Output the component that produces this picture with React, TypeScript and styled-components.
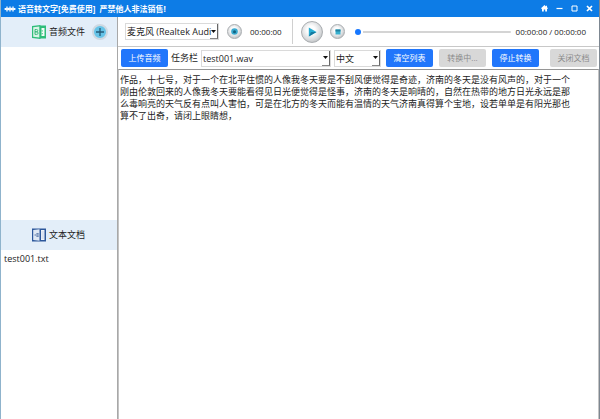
import React, { useState } from "react";
import styled, { createGlobalStyle, css } from "styled-components";

const GlobalStyle = createGlobalStyle`
  *, *::before, *::after { box-sizing: border-box; }
  body {
    margin: 0;
    background: #fff;
    color: #222;
    font-family: "Open Sans", "Noto Sans CJK SC", sans-serif;
    font-size: 9px;
    line-height: 12px;
  }
  button, input, select, textarea { font: inherit; color: inherit; margin: 0; }
`;

const Window = styled.div`
  display: flex;
  flex-direction: column;
  min-height: 100vh;
  border-left: 1px solid #8fb3cc;
  border-right: 1px solid #7d8791;
`;

const TitleBar = styled.header`
  display: flex;
  align-items: center;
  height: 17px;
  padding: 0 2px 0 3px;
  background: #0d7ce6;
  color: #fff;
`;

const Title = styled.h1`
  flex: 1;
  margin: 0 0 0 2px;
  font-size: 8px;
  line-height: 12px;
  font-weight: 700;
  white-space: pre;
`;

const WindowButton = styled.button`
  display: flex;
  align-items: center;
  justify-content: center;
  width: 15px;
  height: 15px;
  padding: 0;
  border: 0;
  background: none;
`;

const Body = styled.div`
  flex: 1;
  display: grid;
  grid-template-columns: 117px minmax(0, 1fr);
`;

const Sidebar = styled.aside`
  display: grid;
  grid-template-rows: 51fr 50fr;
  border-right: 1px solid #a8a8a8;
`;

const SectionHeader = styled.div`
  display: flex;
  align-items: center;
  height: 30px;
  padding-left: 31px;
  background: #e3eef9;
`;

const SectionTitle = styled.h2`
  margin: 0 0 0 3px;
  font-size: 9px;
  line-height: 12px;
  font-weight: 400;
`;

const FileList = styled.ul`
  margin: 0;
  padding: 3px;
  list-style: none;
`;

const roundFace = css`
  display: flex;
  align-items: center;
  justify-content: center;
  flex: none;
  padding: 0;
  border-radius: 50%;
`;

const AddButton = styled.button`
  ${roundFace}
  width: 16px;
  height: 16px;
  margin-left: 7px;
  border: 2px solid #ced9e2;
  background: #66c4e8;
`;

const MediaButton = styled.button<{ $size: number }>`
  ${roundFace}
  width: ${(p) => p.$size}px;
  height: ${(p) => p.$size}px;
  border: 1px solid #a9adb0;
  background: radial-gradient(circle at 45% 40%, #fdfdfd 25%, #d8dadc 60%, #a2a5a8 100%);
`;

const Main = styled.main`
  display: flex;
  flex-direction: column;
  min-width: 0;
`;

const PlayerBar = styled.div`
  display: flex;
  align-items: center;
  height: 30px;
  padding: 0 13px 0 7px;
  border-bottom: 1px solid #c8c8c8;
`;

const Recorder = styled.div`
  display: flex;
  align-items: center;
  width: 168px;
  height: 25px;
  gap: 8px;
  border-right: 1px solid #d0d0d0;
`;

const Player = styled.div`
  flex: 1;
  display: flex;
  align-items: center;
  min-width: 0;
  padding-left: 8px;
  gap: 7px;
`;

const Time = styled.span`
  font-size: 8px;
  white-space: nowrap;
`;

const Progress = styled.input`
  flex: 1;
  min-width: 0;
  height: 12px;
  margin-left: 3px;
  margin-right: -2px;
  appearance: none;
  background: transparent;
  &::-webkit-slider-runnable-track {
    height: 2px;
    border-radius: 1px;
    background: linear-gradient(to right, #fff 8px, #d4d4d4 8px);
  }
  &::-webkit-slider-thumb {
    appearance: none;
    width: 6px;
    height: 6px;
    margin-top: -2px;
    border-radius: 50%;
    background: #1677ff;
  }
`;

const TaskBar = styled.div`
  display: flex;
  align-items: center;
  height: 22px;
  padding: 0 2px 0 3px;
`;

const ActionButton = styled.button`
  flex: none;
  width: 47px;
  height: 18px;
  padding: 0;
  border: 0;
  border-radius: 2px;
  background: #2176fb;
  color: #fff;
  font-size: 8px;
  line-height: 12px;
  white-space: nowrap;
  &:disabled {
    background: #d8d8d8;
    color: #8b8b8b;
  }
`;

const Actions = styled.div`
  display: flex;
  margin-left: 5px;
  gap: 6px;
  & > :last-child { margin-left: 5px; }
`;

const TaskLabel = styled.label`
  margin: 0 3px;
  white-space: nowrap;
`;

const SelectFrame = styled.span<{ $width?: number }>`
  position: relative;
  display: flex;
  flex: ${(p) => (p.$width ? "none" : "1")};
  width: ${(p) => (p.$width ? `${p.$width}px` : "auto")};
  min-width: 0;
  height: 17px;
  border: 1px solid #dadada;
`;

const Select = styled.select`
  width: 100%;
  padding: 0 6px 0 1px;
  border: 0;
  appearance: none;
  background: #fff;
  line-height: 15px;
`;

const Arrow = styled.span`
  position: absolute;
  top: 0;
  right: 0;
  bottom: 0;
  width: 8px;
  display: flex;
  align-items: center;
  justify-content: center;
  border-right: 1px solid #666;
  border-bottom: 1px solid #888;
  pointer-events: none;
`;

const LanguageSlot = styled.div`
  margin-left: 3px;
`;

const Transcript = styled.textarea`
  flex: 1;
  width: 100%;
  padding: 4px 2px 3px 1px;
  border: 0;
  border-top: 1px solid #969696;
  border-right: 1px solid #c4c4c4;
  border-left: 1px solid #c4c4c4;
  outline: 0;
  resize: none;
  font-size: 9px;
  line-height: 12px;
  white-space: pre-wrap;
`;

const transcript = [
  "作品，十七号，对于一个在北平住惯的人像我冬天要是不刮风便觉得是奇迹，济南的冬天是没有风声的，对于一个",
  "刚由伦敦回来的人像我冬天要能看得见日光便觉得是怪事，济南的冬天是响晴的，自然在热带的地方日光永远是那",
  "么毒响亮的天气反有点叫人害怕，可是在北方的冬天而能有温情的天气济南真得算个宝地，设若单单是有阳光那也",
  "算不了出奇，请闭上眼睛想，",
].join("\n");

function DropDown({ label, value, width, id }: { label: string; value: string; width?: number; id: string }) {
  return (
    <SelectFrame $width={width}>
      <Select id={id} aria-label={label} defaultValue={value}>
        <option>{value}</option>
      </Select>
      <Arrow>
        <svg width="5" height="3" viewBox="0 0 5 3" aria-hidden="true">
          <path d="M0 0h5L2.5 3z" fill="#111" />
        </svg>
      </Arrow>
    </SelectFrame>
  );
}

const Logo = () => (
  <svg width="12" height="8" viewBox="0 0 12 8" fill="none" stroke="#fff" aria-hidden="true">
    <path d="M.5 4h11" strokeWidth="1.6" />
    <path d="M3 1.6v4.8M6 1.6v4.8M9 1.6v4.8" strokeWidth="1.3" />
    <path d="M1.6 3v2M4.5 2.8v2.4M7.5 2.8v2.4M10.4 3v2" />
  </svg>
);

const AudioIcon = () => (
  <svg width="14" height="14" viewBox="0 0 14 14" aria-hidden="true">
    <path d="M7 .5h7v13H7z" fill="#2fbd7a" />
    <path d="M9.5 3h3v8h-3z" fill="#f2fbf6" />
    <path d="M9.5 5.2h1.4v1.2H9.5zM9.5 8h1.4v1.2H9.5z" fill="#5fcb98" />
    <path d="M0 1 8.5 0v14L0 13z" fill="#2fbd7a" />
    <path d="M1.2 2.2 7.3 1.6v10.8l-6.1-.6z" fill="#d9f3e6" />
    <path d="M3 4.5h1.6a1.1 1.1 0 0 1 0 2.3H3zm0 2.3h1.8a1.2 1.2 0 0 1 0 2.6H3z" fill="none" stroke="#2fb475" strokeWidth=".9" />
  </svg>
);

const DocumentIcon = () => (
  <svg width="14" height="14" viewBox="0 0 14 14" aria-hidden="true">
    <path d="M0 .5h14v13H0z" fill="#2c579b" />
    <path d="M9 2h3.5v10H9z" fill="#f1f5fb" />
    <path d="M9.5 4h2.6M9.5 6h2.6M9.5 8h2.6M9.5 10h2.6" stroke="#b4c3de" strokeWidth=".7" />
    <path d="M1.2 2 7.5 1.2v11.6L1.2 12z" fill="#dfe8f4" />
    <path d="M2.5 7h1.7M4.4 5.7h2.3M4.4 7h2.3M4.4 8.3h2.3" stroke="#47699f" strokeWidth=".9" />
  </svg>
);

export default function App() {
  const [text, setText] = useState(transcript);
  return (
    <>
      <GlobalStyle />
      <Window>
        <TitleBar>
          <Logo />
          <Title>{"语音转文字[免费使用]  严禁他人非法销售!"}</Title>
          <WindowButton aria-label="主页">
            <svg width="7" height="7" viewBox="0 0 7 7" fill="#fff">
              <path d="M3.5 0 0 3.3l.5.6.5-.4V6.5h1.8V4.6h1.4v1.9H6v-3l.5.4.5-.6-1-1V.7H5v.8z" />
            </svg>
          </WindowButton>
          <WindowButton aria-label="最小化">
            <svg width="7" height="7" viewBox="0 0 7 7"><path d="M.5 3.5h6" stroke="#fff" strokeWidth="1.2" /></svg>
          </WindowButton>
          <WindowButton aria-label="最大化">
            <svg width="7" height="7" viewBox="0 0 7 7"><path d="M1 1h5v5H1z" fill="none" stroke="#fff" /></svg>
          </WindowButton>
          <WindowButton aria-label="关闭">
            <svg width="7" height="7" viewBox="0 0 7 7"><path d="m1 1 5 5m0-5L1 6" stroke="#fff" strokeWidth="1.7" /></svg>
          </WindowButton>
        </TitleBar>
        <Body>
          <Sidebar>
            <section>
              <SectionHeader>
                <AudioIcon />
                <SectionTitle>音频文件</SectionTitle>
                <AddButton aria-label="添加音频">
                  <svg width="8" height="8" viewBox="0 0 8 8"><path d="M4 0v8M0 4h8" stroke="#245b78" strokeWidth="1.3" /></svg>
                </AddButton>
              </SectionHeader>
            </section>
            <section>
              <SectionHeader>
                <DocumentIcon />
                <SectionTitle>文本文档</SectionTitle>
              </SectionHeader>
              <FileList>
                <li>test001.txt</li>
              </FileList>
            </section>
          </Sidebar>
          <Main>
            <PlayerBar>
              <Recorder>
                <DropDown id="device" label="录音设备" value="麦克风 (Realtek Audi" width={94} />
                <MediaButton $size={15} aria-label="录音">
                  <svg width="7" height="7" viewBox="0 0 7 7">
                    <circle cx="3.5" cy="3.5" r="3.3" fill="#39a9cf" />
                    <circle cx="3.5" cy="3.8" r="1.5" fill="#12617f" />
                  </svg>
                </MediaButton>
                <Time>00:00:00</Time>
              </Recorder>
              <Player>
                <MediaButton $size={22} aria-label="播放">
                  <svg width="9" height="10" viewBox="0 0 9 10">
                    <path d="M.8.5 8.5 5 .8 9.5z" fill="#28acd2" />
                    <path d="M.8 9.5 8.5 5H3z" fill="#15799f" />
                  </svg>
                </MediaButton>
                <MediaButton $size={15} aria-label="停止">
                  <svg width="6" height="6" viewBox="0 0 6 6">
                    <path d="M.5.5h5v5h-5z" fill="#38b0cf" />
                    <path d="M.5.5h5v2h-5z" fill="#20809f" />
                  </svg>
                </MediaButton>
                <Progress type="range" min={0} max={100} defaultValue={0} aria-label="播放进度" />
                <Time>00:00:00 / 00:00:00</Time>
              </Player>
            </PlayerBar>
            <TaskBar>
              <ActionButton>上传音频</ActionButton>
              <TaskLabel htmlFor="task">任务栏</TaskLabel>
              <DropDown id="task" label="任务栏" value="test001.wav" />
              <LanguageSlot>
                <DropDown id="language" label="语言" value="中文" width={47} />
              </LanguageSlot>
              <Actions>
                <ActionButton>清空列表</ActionButton>
                <ActionButton disabled>转换中...</ActionButton>
                <ActionButton>停止转换</ActionButton>
                <ActionButton disabled>关闭文档</ActionButton>
              </Actions>
            </TaskBar>
            <Transcript aria-label="转换结果" spellCheck={false} value={text} onChange={(e) => setText(e.target.value)} />
          </Main>
        </Body>
      </Window>
    </>
  );
}
